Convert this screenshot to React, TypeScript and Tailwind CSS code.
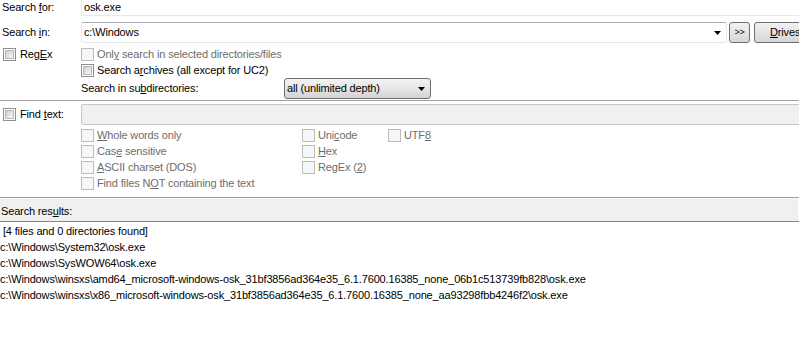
import React from "react";

const U = ({ children }: { children: React.ReactNode }) => (
  <span className="underline decoration-1 underline-offset-[1px]">{children}</span>
);

function Box({ disabled }: { disabled?: boolean }) {
  if (disabled)
    return (
      <span className="block w-[13px] h-[13px] shrink-0 border border-[#bcbcbc] bg-[#f7f7f7]" />
    );
  return (
    <span className="block w-[13px] h-[13px] shrink-0 border border-[#8e8f8f] bg-white p-[1px]">
      <span className="block w-full h-full border border-[#b3b7bd] bg-gradient-to-br from-[#c9cdd3] via-[#e2e4e7] to-[#f6f6f6]" />
    </span>
  );
}

function Arrow() {
  return (
    <svg width="7" height="4" viewBox="0 0 7 4" className="shrink-0">
      <path d="M0 0H7L3.5 4Z" fill="#000" />
    </svg>
  );
}

function Check({
  disabled,
  children,
  className = "",
}: {
  disabled?: boolean;
  children: React.ReactNode;
  className?: string;
}) {
  return (
    <div className={`flex items-center gap-[3px] shrink-0 ${className}`}>
      <Box disabled={disabled} />
      <span className={disabled ? "text-[#6d6d6d] whitespace-nowrap" : "text-black whitespace-nowrap"}>
        {children}
      </span>
    </div>
  );
}

const results = [
  " [4 files and 0 directories found]",
  "c:\\Windows\\System32\\osk.exe",
  "c:\\Windows\\SysWOW64\\osk.exe",
  "c:\\Windows\\winsxs\\amd64_microsoft-windows-osk_31bf3856ad364e35_6.1.7600.16385_none_06b1c513739fb828\\osk.exe",
  "c:\\Windows\\winsxs\\x86_microsoft-windows-osk_31bf3856ad364e35_6.1.7600.16385_none_aa93298fbb4246f2\\osk.exe",
];

export default function App() {
  return (
    <div className="w-[799px] h-[355px] overflow-hidden bg-white text-black font-['Liberation_Sans',Arial,sans-serif] text-[11px] leading-[13px] tracking-[-0.15px] flex flex-col">
      {/* Section 1 */}
      <div className="h-[101px] shrink-0 border-b border-[#a0a0a0] flex flex-col">
        <div className="flex items-center h-[21px] -mt-[5px] shrink-0">
          <div className="w-[81px] pl-[2px] pt-[4px] shrink-0">
            Search <U>f</U>or:
          </div>
          <div className="flex-1 h-full -mr-[6px] border border-[#e3e9ef] border-t-[#abadb3] pl-[2px] flex items-center pt-[4px]">
            osk.exe
          </div>
        </div>
        <div className="flex items-center h-[21px] mt-[6px] shrink-0">
          <div className="w-[81px] pl-[2px] shrink-0">
            Search <U>i</U>n:
          </div>
          <div className="w-[646px] h-full shrink-0 border border-[#e3e9ef] border-t-[#abadb3] rounded-[2px] pl-[2px] flex items-center">
            <span>c:\Windows</span>
            <span className="ml-auto mr-[5px] flex">
              <Arrow />
            </span>
          </div>
          <div className="ml-[2px] w-[21px] h-full shrink-0 rounded-[3px] border border-[#707070] bg-gradient-to-b from-[#f2f2f2] to-[#d6d6d6] flex items-center justify-center text-[9px]">
            &gt;&gt;
          </div>
          <div className="ml-[4px] w-[75px] h-full shrink-0 rounded-[3px] border border-[#707070] bg-gradient-to-b from-[#f2f2f2] to-[#d6d6d6] flex items-center pl-[15px]">
            <U>D</U>rives
          </div>
        </div>
        <div className="flex items-center h-[15px] mt-[4px] shrink-0">
          <div className="w-[81px] pl-[3px] shrink-0">
            <Check className="gap-[4px]">
              Reg<U>E</U>x
            </Check>
          </div>
          <Check disabled>
            Onl<U>y</U> search in selected directories/files
          </Check>
        </div>
        <div className="flex items-center h-[15px] mt-[1px] shrink-0">
          <div className="w-[81px] shrink-0" />
          <Check>
            Search a<U>r</U>chives (all except for UC2)
          </Check>
        </div>
        <div className="flex items-center h-[21px] shrink-0">
          <div className="w-[81px] shrink-0" />
          <div className="w-[203px] shrink-0">
            Search in su<U>b</U>directories:
          </div>
          <div className="w-[147px] h-full shrink-0 rounded-[3px] border border-[#707070] bg-gradient-to-b from-[#f2f2f2] via-[#e6e6e6] to-[#d2d2d2] flex items-center pl-[2px]">
            <span>all (unlimited depth)</span>
            <span className="ml-auto mr-[5px] flex">
              <Arrow />
            </span>
          </div>
        </div>
      </div>

      {/* Section 2 */}
      <div className="h-[97px] shrink-0 border-b border-[#a0a0a0] flex flex-col">
        <div className="flex items-center h-[21px] mt-[3px] shrink-0">
          <div className="w-[81px] pl-[3px] shrink-0">
            <Check className="gap-[4px]">
              Find <U>t</U>ext:
            </Check>
          </div>
          <div className="flex-1 h-full -mr-[6px] border border-[#c3c6ca] rounded-[2px] bg-[#f0f0f0]" />
        </div>
        <div className="flex flex-col mt-[2px] pl-[81px]">
          <div className="flex items-center h-[16px]">
            <Check disabled className="w-[221px]">
              <U>W</U>hole words only
            </Check>
            <Check disabled className="w-[86px]">
              Uni<U>c</U>ode
            </Check>
            <Check disabled>
              UTF<U>8</U>
            </Check>
          </div>
          <div className="flex items-center h-[16px]">
            <Check disabled className="w-[221px]">
              Cas<U>e</U> sensitive
            </Check>
            <Check disabled>
              <U>H</U>ex
            </Check>
          </div>
          <div className="flex items-center h-[16px]">
            <Check disabled className="w-[221px]">
              <U>A</U>SCII charset (DOS)
            </Check>
            <Check disabled>
              RegEx (<U>2</U>)
            </Check>
          </div>
          <div className="flex items-center h-[16px]">
            <Check disabled>
              Find files N<U>O</U>T containing the text
            </Check>
          </div>
        </div>
      </div>

      {/* Section 3 */}
      <div className="h-[22px] mt-[1px] shrink-0 bg-[#f0f0f0] pl-[1px] pt-[6px] mr-[1px]">
        Search res<U>u</U>lts:
      </div>
      <div className="flex-1 border-t border-[#828790] pt-[1px] bg-white">
        {results.map((r, i) => (
          <div key={i} className="h-[16px] flex items-center whitespace-pre">
            {r}
          </div>
        ))}
      </div>
    </div>
  );
}
